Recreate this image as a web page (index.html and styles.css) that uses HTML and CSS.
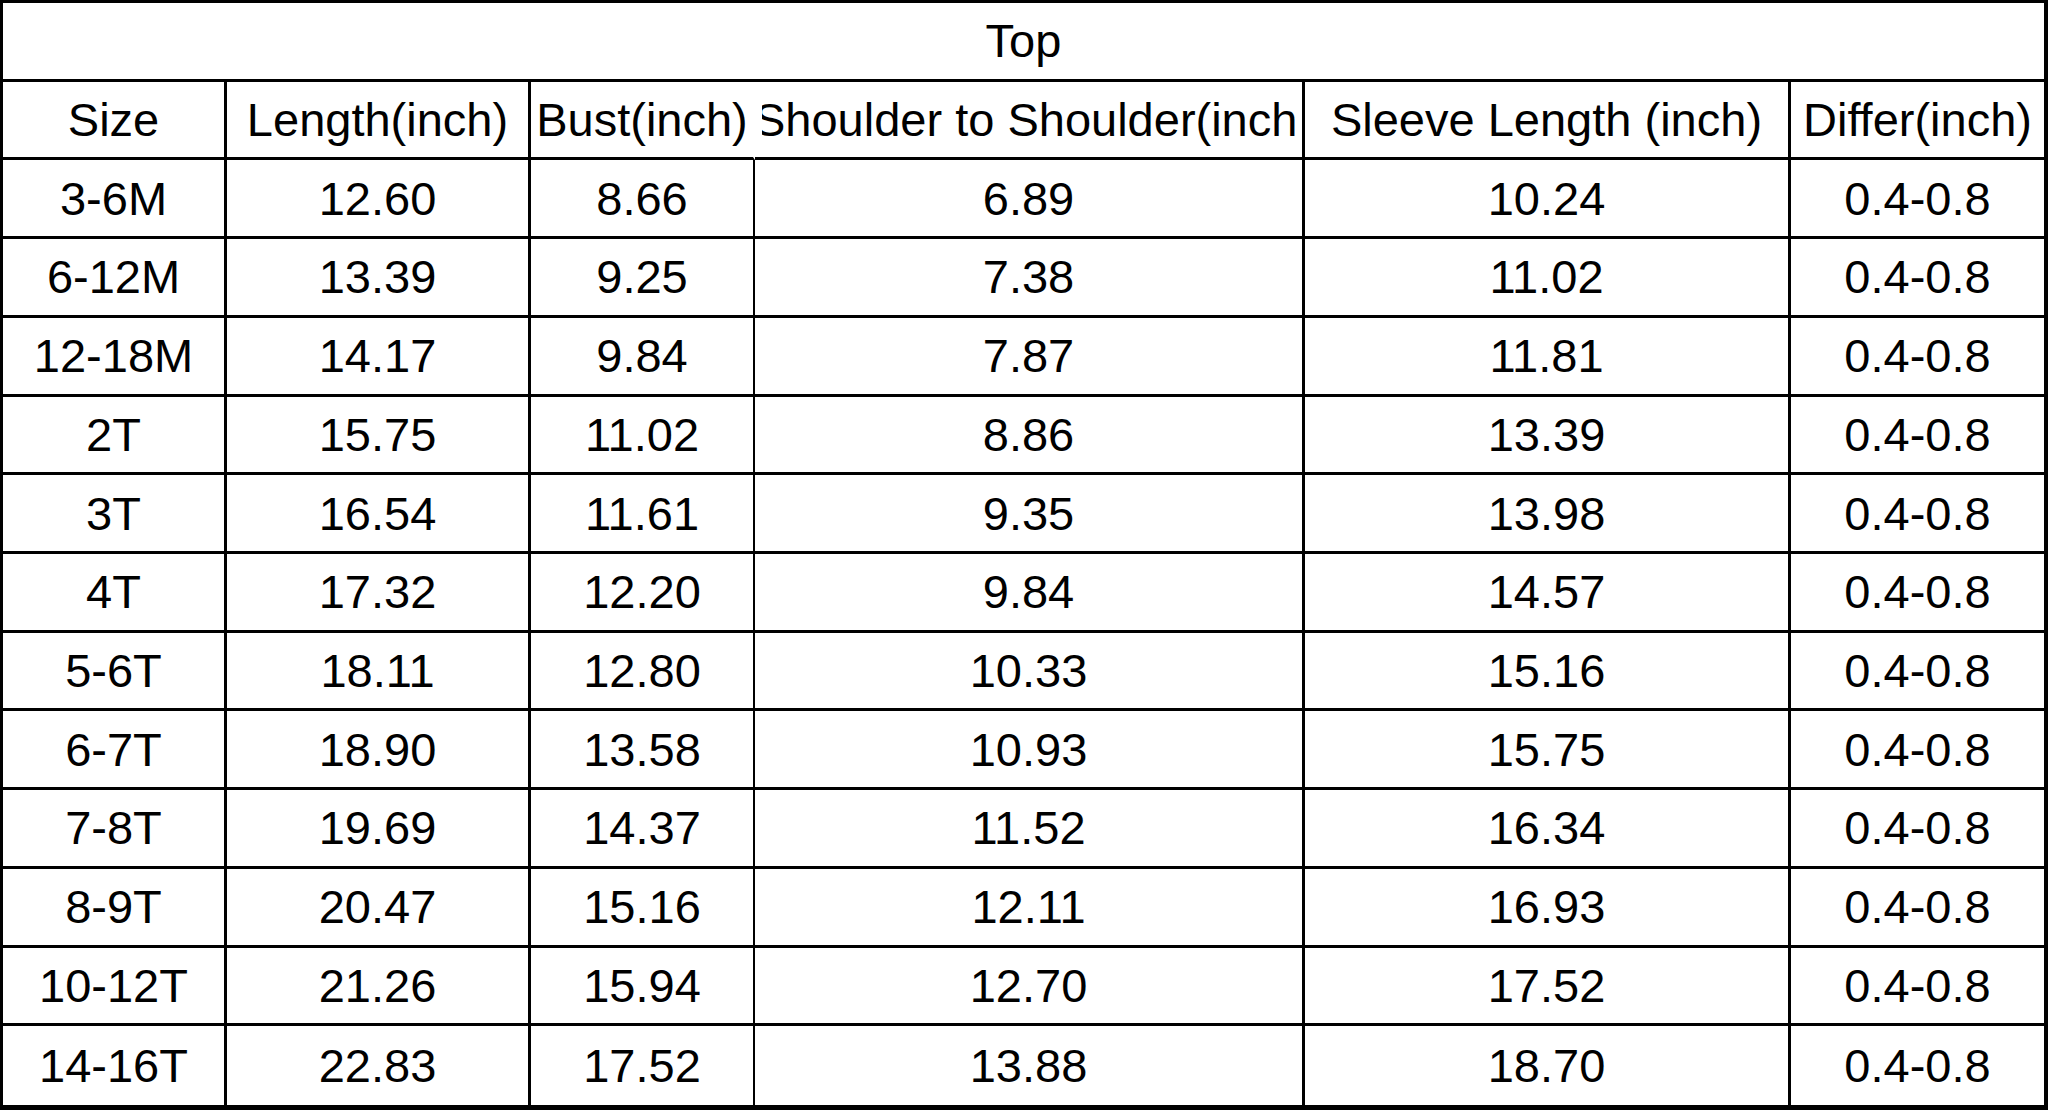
FILE: index.html
```html
<!DOCTYPE html>
<html>
<head>
<meta charset="utf-8">
<link rel="stylesheet" href="styles.css">
</head>
<body>
<div class="chart">
  <div class="cell title">Top</div>

  <div class="cell">Size</div>
  <div class="cell">Length(inch)</div>
  <div class="cell c3 nob">Bust(inch)</div>
  <div class="cell wide"><span class="clip"><span class="shift">Shoulder to Shoulder(inch)</span></span></div>
  <div class="cell">Sleeve Length (inch)</div>
  <div class="cell last">Differ(inch)</div>

  <div class="cell">3-6M</div><div class="cell">12.60</div><div class="cell c3">8.66</div><div class="cell">6.89</div><div class="cell">10.24</div><div class="cell last">0.4-0.8</div>
  <div class="cell">6-12M</div><div class="cell">13.39</div><div class="cell c3">9.25</div><div class="cell">7.38</div><div class="cell">11.02</div><div class="cell last">0.4-0.8</div>
  <div class="cell">12-18M</div><div class="cell">14.17</div><div class="cell c3">9.84</div><div class="cell">7.87</div><div class="cell">11.81</div><div class="cell last">0.4-0.8</div>
  <div class="cell">2T</div><div class="cell">15.75</div><div class="cell c3">11.02</div><div class="cell">8.86</div><div class="cell">13.39</div><div class="cell last">0.4-0.8</div>
  <div class="cell">3T</div><div class="cell">16.54</div><div class="cell c3">11.61</div><div class="cell">9.35</div><div class="cell">13.98</div><div class="cell last">0.4-0.8</div>
  <div class="cell">4T</div><div class="cell">17.32</div><div class="cell c3">12.20</div><div class="cell">9.84</div><div class="cell">14.57</div><div class="cell last">0.4-0.8</div>
  <div class="cell">5-6T</div><div class="cell">18.11</div><div class="cell c3">12.80</div><div class="cell">10.33</div><div class="cell">15.16</div><div class="cell last">0.4-0.8</div>
  <div class="cell">6-7T</div><div class="cell">18.90</div><div class="cell c3">13.58</div><div class="cell">10.93</div><div class="cell">15.75</div><div class="cell last">0.4-0.8</div>
  <div class="cell">7-8T</div><div class="cell">19.69</div><div class="cell c3">14.37</div><div class="cell">11.52</div><div class="cell">16.34</div><div class="cell last">0.4-0.8</div>
  <div class="cell">8-9T</div><div class="cell">20.47</div><div class="cell c3">15.16</div><div class="cell">12.11</div><div class="cell">16.93</div><div class="cell last">0.4-0.8</div>
  <div class="cell">10-12T</div><div class="cell">21.26</div><div class="cell c3">15.94</div><div class="cell">12.70</div><div class="cell">17.52</div><div class="cell last">0.4-0.8</div>
  <div class="cell bot">14-16T</div><div class="cell bot">22.83</div><div class="cell c3 bot">17.52</div><div class="cell bot">13.88</div><div class="cell bot">18.70</div><div class="cell last bot">0.4-0.8</div>
</div>
</body>
</html>
```

FILE: styles.css
```css
html, body {
  margin: 0;
  padding: 0;
  background: #ffffff;
}

.chart {
  box-sizing: border-box;
  width: 2048px;
  height: 1110px;
  display: grid;
  grid-template-columns: 224px 304px 224px 550px 486px 1fr;
  grid-template-rows: repeat(14, 1fr);
  border-top: 3px solid #000;
  border-left: 3px solid #000;
  border-right: 4px solid #000;
  border-bottom: 5px solid #000;
  font-family: "Liberation Sans", Arial, sans-serif;
  font-size: 47px;
  color: #000;
  background: #fff;
}

.cell {
  box-sizing: border-box;
  display: flex;
  align-items: center;
  justify-content: center;
  min-width: 0;
  white-space: nowrap;
  border-right: 3px solid #000;
  border-bottom: 3px solid #000;
  overflow: hidden;
}

.title {
  grid-column: 1 / -1;
  border-right: none;
}

.c3 {
  border-right-width: 2px;
}

.nob {
  border-right-color: transparent;
}

.last {
  border-right: none;
}

.bot {
  border-bottom: none;
}

.wide {
  padding: 0 6px 0 7px;
}

.clip {
  display: flex;
  justify-content: center;
  width: 100%;
  overflow: hidden;
}

.shift {
  padding-left: 9px;
}
```
